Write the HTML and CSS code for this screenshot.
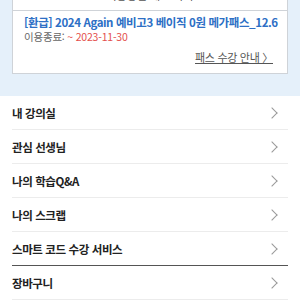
FILE: index.html
```html
<!DOCTYPE html>
<html lang="ko">
<head>
  <meta charset="UTF-8">
  <meta name="viewport" content="width=device-width, initial-scale=1.0">
  <title>마이페이지</title>
  <link rel="stylesheet" href="styles.css">
</head>
<body>
  <div class="pass-area">
    <div class="pass-card">
      <div class="pass-head">이용중인 패스 목록</div>
      <div class="pass-body">
        <p class="pass-title">[환급] 2024 Again 예비고3 베이직 0원 메가패스_12.6</p>
        <p class="pass-date">이용종료: <span class="date">~ 2023-11-30</span></p>
        <a class="pass-guide" href="#">패스 수강 안내 〉</a>
      </div>
    </div>
  </div>

  <ul class="menu">
    <li><span>내 강의실</span><i class="arrow"></i></li>
    <li><span>관심 선생님</span><i class="arrow"></i></li>
    <li><span>나의 학습Q&amp;A</span><i class="arrow"></i></li>
    <li><span>나의 스크랩</span><i class="arrow"></i></li>
    <li class="dark"><span>스마트 코드 수강 서비스</span><i class="arrow"></i></li>
    <li><span>장바구니</span><i class="arrow"></i></li>
  </ul>
</body>
</html>
```

FILE: styles.css
```css
body { margin: 0; font-family: "Noto Sans CJK KR", "Noto Sans", sans-serif; background: #fff; color: #222; }
p { margin: 0; }

.pass-area { background: #e5f0fa; padding: 0 12px 22px; }
.pass-card { background: #fff; border: 1px solid #cfd3d8; border-top: none; margin-top: -12px; }
.pass-head { height: 22px; line-height: 14px; font-size: 11px; color: #555; text-align: center; border-bottom: 1px solid #cfd3d8; overflow: hidden; }
.pass-body { padding: 4px 10px 8px 11px; }
.pass-title { font-size: 11.5px; font-weight: bold; color: #2d6fc5; line-height: 15px; white-space: nowrap; letter-spacing: -0.4px; }
.pass-date { font-size: 10.5px; color: #666; line-height: 13px; letter-spacing: -0.2px; }
.pass-date .date { color: #e4504d; }
.pass-guide { display: block; text-align: right; margin-top: 7px; font-size: 11px; color: #555; text-decoration: underline; line-height: 15px; padding-right: 4px; letter-spacing: -0.3px; }

.menu { list-style: none; margin: 0; padding: 0 12px; }
.menu li { display: flex; align-items: center; justify-content: space-between; height: 33px; border-bottom: 1px solid #ececec; font-size: 11.5px; font-weight: bold; color: #222; letter-spacing: -0.4px; }
.menu li.dark { border-bottom-color: #555; }
.arrow { width: 7px; height: 7px; border-top: 1px solid #999; border-right: 1px solid #999; transform: rotate(45deg); margin-right: 12px; }
```
